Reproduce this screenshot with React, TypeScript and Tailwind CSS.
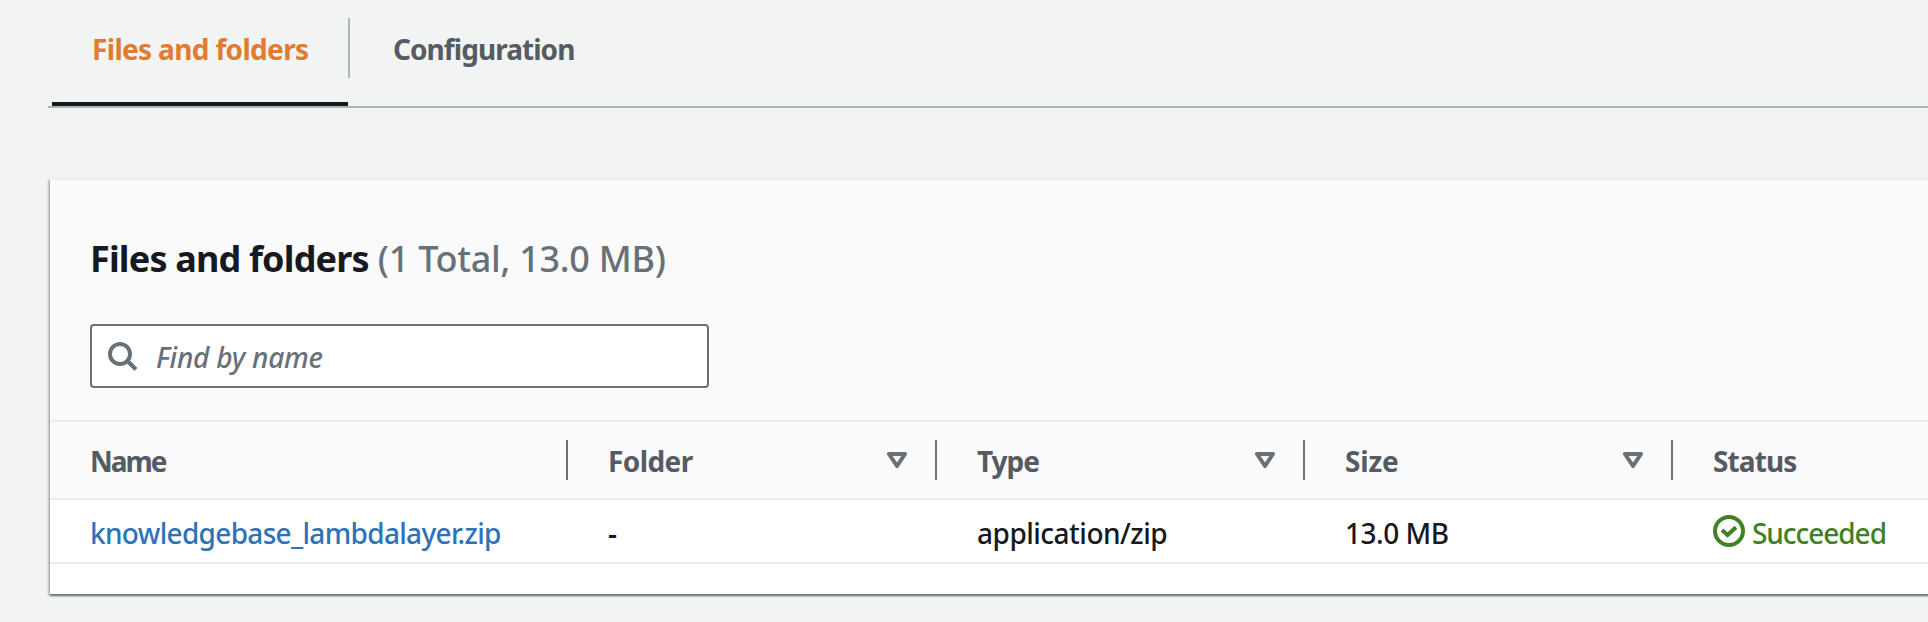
import type { ReactNode } from "react";

function SearchIcon() {
  return (
    <svg className="block h-8 w-8 shrink-0 text-[#687078]" viewBox="0 0 32 32" fill="none" stroke="currentColor" strokeWidth="4">
      <circle cx="13" cy="14" r="10" />
      <path d="M20 20.500L29 29.500" />
    </svg>
  );
}

function SortIcon() {
  return (
    <svg className="block h-4 w-5 shrink-0 text-[#687078]" viewBox="0 0 20 16" fill="none" stroke="currentColor" strokeWidth="4" strokeLinejoin="round">
      <path d="M2 2h16l-8 12z" />
    </svg>
  );
}

function SuccessIcon() {
  return (
    <svg className="block h-8 w-8 shrink-0" viewBox="0 0 32 32" fill="none" stroke="currentColor" strokeWidth="4">
      <circle cx="16" cy="16" r="14" />
      <path d="M9 15l5.500 5L23 12.200" />
    </svg>
  );
}

function HeaderCell({ label, tracking, sortable }: { label: string; tracking: string; sortable?: boolean }) {
  return (
    <div className="flex h-full items-center justify-between pr-7 pl-10">
      <span className={`pt-[2px] font-bold text-[#545b64] ${tracking}`}>{label}</span>
      {sortable && <SortIcon />}
    </div>
  );
}

function Divider() {
  return <div className="my-[18px] w-[2px] shrink-0 bg-[#687078]" />;
}

function Column({ width, divider, children }: { width: string; divider?: boolean; children: ReactNode }) {
  return (
    <div className={`flex ${width}`}>
      <div className="min-w-0 flex-1">{children}</div>
      {divider && <Divider />}
    </div>
  );
}

export default function App() {
  return (
    <div className="h-[622px] w-full overflow-hidden bg-[#f1f4f3] font-['Noto_Sans',sans-serif] text-[28px] leading-10 text-[#16191f]">
      <nav className="ml-12 flex h-[108px] border-b-2 border-[#aab7b8] pl-1 font-bold">
        <div className="flex w-[296px] flex-col border-b-4 border-[#16191f] pt-[29px] pl-10">
          <span className="tracking-[-0.67px] whitespace-nowrap text-[#e07b2f]">Files and folders</span>
        </div>
        <div className="mt-[18px] h-[60px] w-[2px] bg-[#aab7b8]" />
        <div className="pt-[29px] pl-[43px] tracking-[-0.95px] text-[#545b64]">Configuration</div>
      </nav>

      <section className="mt-[70px] -mr-1 ml-[50px] h-[416px] border-t-2 border-[#eaeded] bg-white shadow-[0_2px_2px_0_rgba(0,28,36,0.5),-2px_2px_2px_0_rgba(0,28,36,0.2)]">
        <header className="h-60 bg-[#fafafa] pt-[57px] pl-10">
          <h2 className="text-[36px] leading-[44px]">
            <span className="font-bold tracking-[-0.83px]">Files and folders</span>
            <span className="font-medium tracking-[-0.28px] text-[#687078]"> (1 Total, 13.0 MB)</span>
          </h2>
          <div className="mt-[43px] flex h-16 w-[619px] items-center rounded-[4px] border-2 border-[#687078] bg-white pl-[15px]">
            <SearchIcon />
            <span className="ml-[17px] pt-[2px] font-medium tracking-[-0.25px] text-[#687078] italic">Find by name</span>
          </div>
        </header>

        <div className="flex h-20 border-y-2 border-[#eaeded] bg-[#fafafa]">
          <Column width="w-[518px]" divider><HeaderCell label="Name" tracking="tracking-[-2px]" /></Column>
          <Column width="w-[369px]" divider><HeaderCell label="Folder" tracking="tracking-[-0.6px]" sortable /></Column>
          <Column width="w-[368px]" divider><HeaderCell label="Type" tracking="tracking-[-1px]" sortable /></Column>
          <Column width="w-[368px]" divider><HeaderCell label="Size" tracking="tracking-[-0.2px]" sortable /></Column>
          <Column width="flex-1"><HeaderCell label="Status" tracking="tracking-[-0.9px]" /></Column>
        </div>

        <div className="flex h-16 items-center border-b-2 border-[#eaeded] pt-1 font-medium">
          <div className="w-[518px] pl-10 tracking-[-0.68px] text-[#2e73b8]">knowledgebase_lambdalayer.zip</div>
          <div className="w-[369px] pl-10 font-semibold">-</div>
          <div className="w-[368px] pl-10 tracking-[-0.5px]">application/zip</div>
          <div className="w-[368px] pl-10 tracking-[-0.5px]">13.0 MB</div>
          <div className="flex flex-1 items-center pl-10 text-[#3f8124]">
            <span className="-mt-1"><SuccessIcon /></span>
            <span className="ml-[7px] tracking-[-1.05px]">Succeeded</span>
          </div>
        </div>
      </section>
    </div>
  );
}
